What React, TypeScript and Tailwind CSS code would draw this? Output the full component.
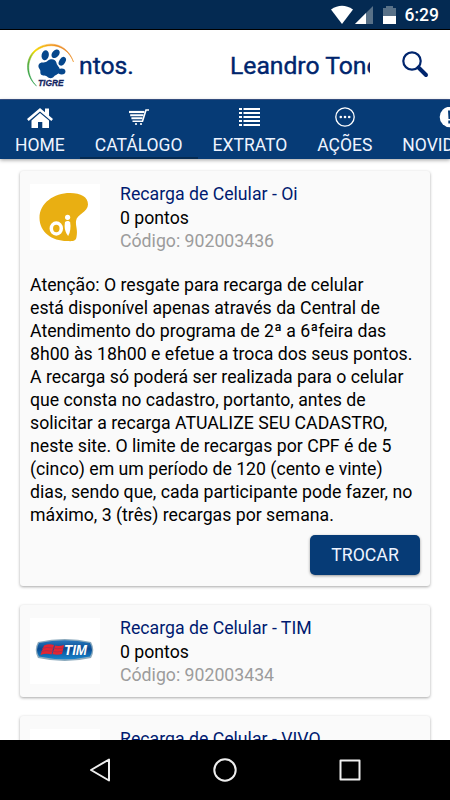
import type { ReactNode } from 'react';

const HomeIcon = () => (
  <svg width="26" height="22" viewBox="0 0 26 22" fill="#fff">
    <path d="M13 1 L26 12 L24.3 14 L13 4.5 L1.7 14 L0 12 Z" />
    <path d="M18 1.5 h4 v8 l-4 -3.4 Z" />
    <path d="M13 5.9 L22 13.5 V21 H15.3 V15 H11 V21 H4.5 V13.5 Z" />
  </svg>
);

const CartIcon = () => (
  <svg width="20" height="22" viewBox="0 0 20 22" fill="none" stroke="#fff">
    <path d="M20 3 H17 L13.5 14.3 H3.5" strokeWidth="1.6" />
    <path d="M0 5 H15.5" strokeWidth="2.2" />
    <path d="M1.2 8.2 H14.5 M2.4 11.3 H13.5" strokeWidth="2.1" />
    <circle cx="7" cy="17" r="1.1" fill="#fff" stroke="none" />
    <circle cx="12" cy="17" r="1.1" fill="#fff" stroke="none" />
  </svg>
);

const ListIcon = () => (
  <svg width="21" height="22" viewBox="0 0 21 22" stroke="#fff" strokeWidth="2">
    <path d="M0 2 H3 M4.5 2 H21 M0 6 H3 M4.5 6 H21 M0 10 H3 M4.5 10 H21 M0 14 H3 M4.5 14 H21 M0 18 H3 M4.5 18 H21" />
  </svg>
);

const MoreIcon = () => (
  <svg width="20" height="22" viewBox="0 0 20 22">
    <circle cx="10" cy="10" r="9.2" fill="none" stroke="#fff" strokeWidth="1.3" />
    <circle cx="5.8" cy="10" r="1.3" fill="#fff" />
    <circle cx="10" cy="10" r="1.3" fill="#fff" />
    <circle cx="14.2" cy="10" r="1.3" fill="#fff" />
  </svg>
);

const AlertIcon = () => (
  <svg width="22" height="22" viewBox="0 0 22 22">
    <circle cx="11" cy="10" r="10.3" fill="#fff" />
    <path d="M9 3.5 h4 l-.5 8.5 h-3 Z M9.3 13.5 h3.4 v3 h-3.4 Z" fill="#063b76" />
  </svg>
);

const TigreLogo = () => (
  <svg width="48" height="46" viewBox="0 0 48 46" className="shrink-0">
    <defs>
      <linearGradient id="arc" x1="0" y1="1" x2="1" y2="0">
        <stop offset="0" stopColor="#008f45" />
        <stop offset="0.3" stopColor="#5fb03a" />
        <stop offset="0.5" stopColor="#f5dc00" />
        <stop offset="0.75" stopColor="#f39a1c" />
        <stop offset="1" stopColor="#d96a32" />
      </linearGradient>
    </defs>
    <path
      d="M9.5 44 C-2 34 -2.5 17 8 8 C20 -2 40 0 46.5 20 C39.5 2 21 -.2 9 9 C-1 18 -.5 34 9.5 44 Z"
      fill="url(#arc)"
      stroke="url(#arc)"
      strokeWidth="0.5"
    />
    <g fill="#06478c">
      <ellipse cx="18.2" cy="13.3" rx="3.6" ry="5.1" transform="rotate(12 18.2 13.3)" />
      <ellipse cx="28.6" cy="11.8" rx="3.4" ry="4.9" transform="rotate(42 28.6 11.8)" />
      <ellipse cx="35.3" cy="19.3" rx="3" ry="4.8" transform="rotate(32 35.3 19.3)" />
      <ellipse cx="34.7" cy="29.5" rx="3.7" ry="3" />
      <path d="M12.5 21.5 C15 19.5 18 21.5 21 18.5 C24 16 29 17 29.5 21 C29.7 23.5 33 25 33 28.5 C33 32 28.5 32.5 27 34.5 C25 37 22 36.5 20 34.5 C18 33 14.5 34.5 13.5 31.5 C13 30 14 29 12.5 27 C11 25 11 23 12.5 21.5 Z" />
    </g>
    <text
      x="11"
      y="43.5"
      textLength="25.5"
      lengthAdjust="spacingAndGlyphs"
      fontFamily="Liberation Sans, sans-serif"
      fontWeight="bold"
      fontStyle="italic"
      fontSize="8.8"
      fill="#12245f"
      stroke="#12245f"
      strokeWidth="0.3"
    >
      TIGRE
    </text>
  </svg>
);

const OiLogo = () => (
  <svg width="70" height="66" viewBox="0 0 70 66">
    <path
      d="M9.5 34 C9.5 19 24 9 40 9 C51 9 58 13 58 20.5 C58 28 47 30 46 37 C45.5 42 48 46 46.5 53 C46 57 43 57.5 37 57 C22 57 9.5 48 9.5 34 Z"
      fill="#e9af12"
    />
    <ellipse cx="26.3" cy="44.5" rx="5" ry="5.4" fill="none" stroke="#fff" strokeWidth="3.5" />
    <path d="M35 38 C36.5 36.5 39.5 36.5 40.2 38.5 C40.9 43 40.5 47.5 38.2 52 C35 48.500 34 43 35 38 Z" fill="#fff" />
    <circle cx="37.6" cy="33.3" r="2.6" fill="#fff" />
  </svg>
);

const TimLogo = () => (
  <svg width="70" height="66" viewBox="0 0 70 66">
    <defs>
      <linearGradient id="tim" x1="0" y1="0" x2="0" y2="1">
        <stop offset="0" stopColor="#2878bd" />
        <stop offset="0.45" stopColor="#094a91" />
        <stop offset="1" stopColor="#1685cd" />
      </linearGradient>
    </defs>
    <path d="M8 24 Q35 18 61 24 Q65.5 32 61 40 Q35 46 8 40 Q3.5 32 8 24 Z" fill="#8caabd" />
    <path d="M9 25 Q35 19.5 60 25 Q64 32 60 38.5 Q35 44 9 38.5 Q5 32 9 25 Z" fill="url(#tim)" />
    <path d="M14 27.5 Q19 25.5 24 27 L21.5 36.5 Q16 35 10.5 37 Z M25 27.5 Q29 28.5 34 27 L32 36 Q27 37.5 22.5 36 Z" fill="#e52531" />
    <path d="M12 30.5 Q17 28.5 22 30 T33.5 30 M11 33.7 Q16 31.7 21.5 33.2 T33 33.2" stroke="#a52f50" strokeWidth="0.8" fill="none" />
    <text
      x="34"
      y="37.3"
      textLength="23"
      lengthAdjust="spacingAndGlyphs"
      fontFamily="Liberation Sans, sans-serif"
      fontSize="15.5"
      fontWeight="bold"
      fontStyle="italic"
      fill="#fff"
    >
      TIM
    </text>
  </svg>
);

const tabs = [
  { label: 'HOME', icon: <HomeIcon /> },
  { label: 'CATÁLOGO', icon: <CartIcon />, active: true },
  { label: 'EXTRATO', icon: <ListIcon /> },
  { label: 'AÇÕES', icon: <MoreIcon /> },
  { label: 'NOVIDADES', icon: <AlertIcon /> },
];

const notice = [
  'Atenção: O resgate para recarga de celular',
  'está disponível apenas através da Central de',
  'Atendimento do programa de 2ª a 6ªfeira das',
  '8h00 às 18h00 e efetue a troca dos seus pontos.',
  'A recarga só poderá ser realizada para o celular',
  'que consta no cadastro, portanto, antes de',
  'solicitar a recarga ATUALIZE SEU CADASTRO,',
  'neste site. O limite de recargas por CPF é de 5',
  '(cinco) em um período de 120 (cento e vinte)',
  'dias, sendo que, cada participante pode fazer, no',
  'máximo, 3 (três) recargas por semana.',
];

type CardProps = {
  title: string;
  code: string;
  logo?: ReactNode;
  children?: ReactNode;
};

const Card = ({ title, code, logo, children }: CardProps) => (
  <article className="shrink-0 rounded-[3px] bg-[#fafafa] px-2.5 py-[13px] shadow-[0_1px_3px_rgba(0,0,0,0.35)]">
    <div className="flex gap-5">
      <div className="h-[66px] w-[70px] shrink-0 bg-white">{logo}</div>
      <div className="-mt-px h-[67px] text-[17.7px] leading-[23.7px] whitespace-nowrap">
        <h2 className="text-[#001a70]">{title}</h2>
        <p className="text-black">0 pontos</p>
        <p className="text-[#9c9c9c]">Código: {code}</p>
      </div>
    </div>
    {children}
  </article>
);

const App = () => {
  return (
    <div className="flex h-[800px] w-[450px] flex-col overflow-hidden bg-white font-[Roboto,sans-serif]">
      <div className="flex h-[30px] shrink-0 items-center justify-end border-b border-black bg-[#042a52] pt-[2px] pr-[11px]">
        <svg width="66" height="20" viewBox="0 0 66 20" className="-mt-[2px]">
          <path d="M0 4.5 Q11 -3 22 4.5 L11 19 Z" fill="#fff" />
          <path d="M42 1 V19 H24 Z" fill="#587188" />
          <path d="M35 8 V19 H24 Z" fill="#fff" />
          <path d="M55 1 h7 v2 h3 v8 H52 V3 h3 Z" fill="#587188" />
          <path d="M52 11 h13 v8 H52 Z" fill="#fff" />
        </svg>
        <span className="ml-2 text-[17.5px] leading-none font-medium text-white">6:29</span>
      </div>

      <header className="flex h-[70px] shrink-0 items-center border-b border-[#3a568c] pl-[27px]">
        <TigreLogo />
        <div className="mt-[2px] ml-1 flex w-[291px] overflow-hidden text-[24.7px] leading-[30px] whitespace-nowrap text-[#00256d] [-webkit-text-stroke:0.4px_#00256d]">
          <span className="w-[151px] shrink-0">ntos.</span>
          <span>Leandro Toneli</span>
        </div>
        <svg width="27" height="27" viewBox="0 0 27 27" className="ml-8 shrink-0" fill="none" stroke="#00256d">
          <circle cx="10" cy="10" r="8.7" strokeWidth="2.2" />
          <path d="M16.5 16.5 L24 24" strokeWidth="4" strokeLinecap="round" />
        </svg>
      </header>

      <nav className="z-10 flex h-[59px] shrink-0 bg-[#063b76] shadow-[0_1px_4px_rgba(0,0,0,0.4)]">
        {tabs.map((tab) => (
          <div
            key={tab.label}
            className={`flex shrink-0 flex-col items-center border-b-2 px-[15px] pt-[7px] text-[17.5px] leading-[22px] text-[#eef4ff] ${
              tab.active ? 'border-[#042a52]' : 'border-[#063b76]'
            }`}
          >
            {tab.icon}
            <span className="mt-[5px]">{tab.label}</span>
          </div>
        ))}
      </nav>

      <main className="flex min-h-0 flex-1 flex-col gap-[19px] overflow-hidden px-5 pt-3">
        <Card title="Recarga de Celular - Oi" code="902003436" logo={<OiLogo />}>
          <p className="mt-6 text-[17.7px] leading-[23px] whitespace-nowrap text-black">
            {notice.map((line) => (
              <span key={line} className="block">
                {line}
              </span>
            ))}
          </p>
          <div className="mt-2 -mb-0.5 flex justify-end">
            <button className="h-10 w-[110px] rounded-[5px] bg-[#063b76] pt-px text-[17.7px] text-[#eef4ff] shadow-[0_1px_3px_rgba(0,0,0,0.4)]">
              TROCAR
            </button>
          </div>
        </Card>
        <Card title="Recarga de Celular - TIM" code="902003434" logo={<TimLogo />} />
        <Card title="Recarga de Celular - VIVO" code="902003435" />
      </main>

      <footer className="z-10 h-[60px] shrink-0 bg-black">
        <svg width="450" height="60" viewBox="0 0 450 60" fill="none" stroke="#eee" strokeWidth="2" strokeLinejoin="round">
          <path d="M109 19.5 V40.5 L91 30 Z" />
          <circle cx="225" cy="30" r="10.7" />
          <rect x="340.5" y="20.5" width="19" height="19" />
        </svg>
      </footer>
    </div>
  );
};

export default App;
